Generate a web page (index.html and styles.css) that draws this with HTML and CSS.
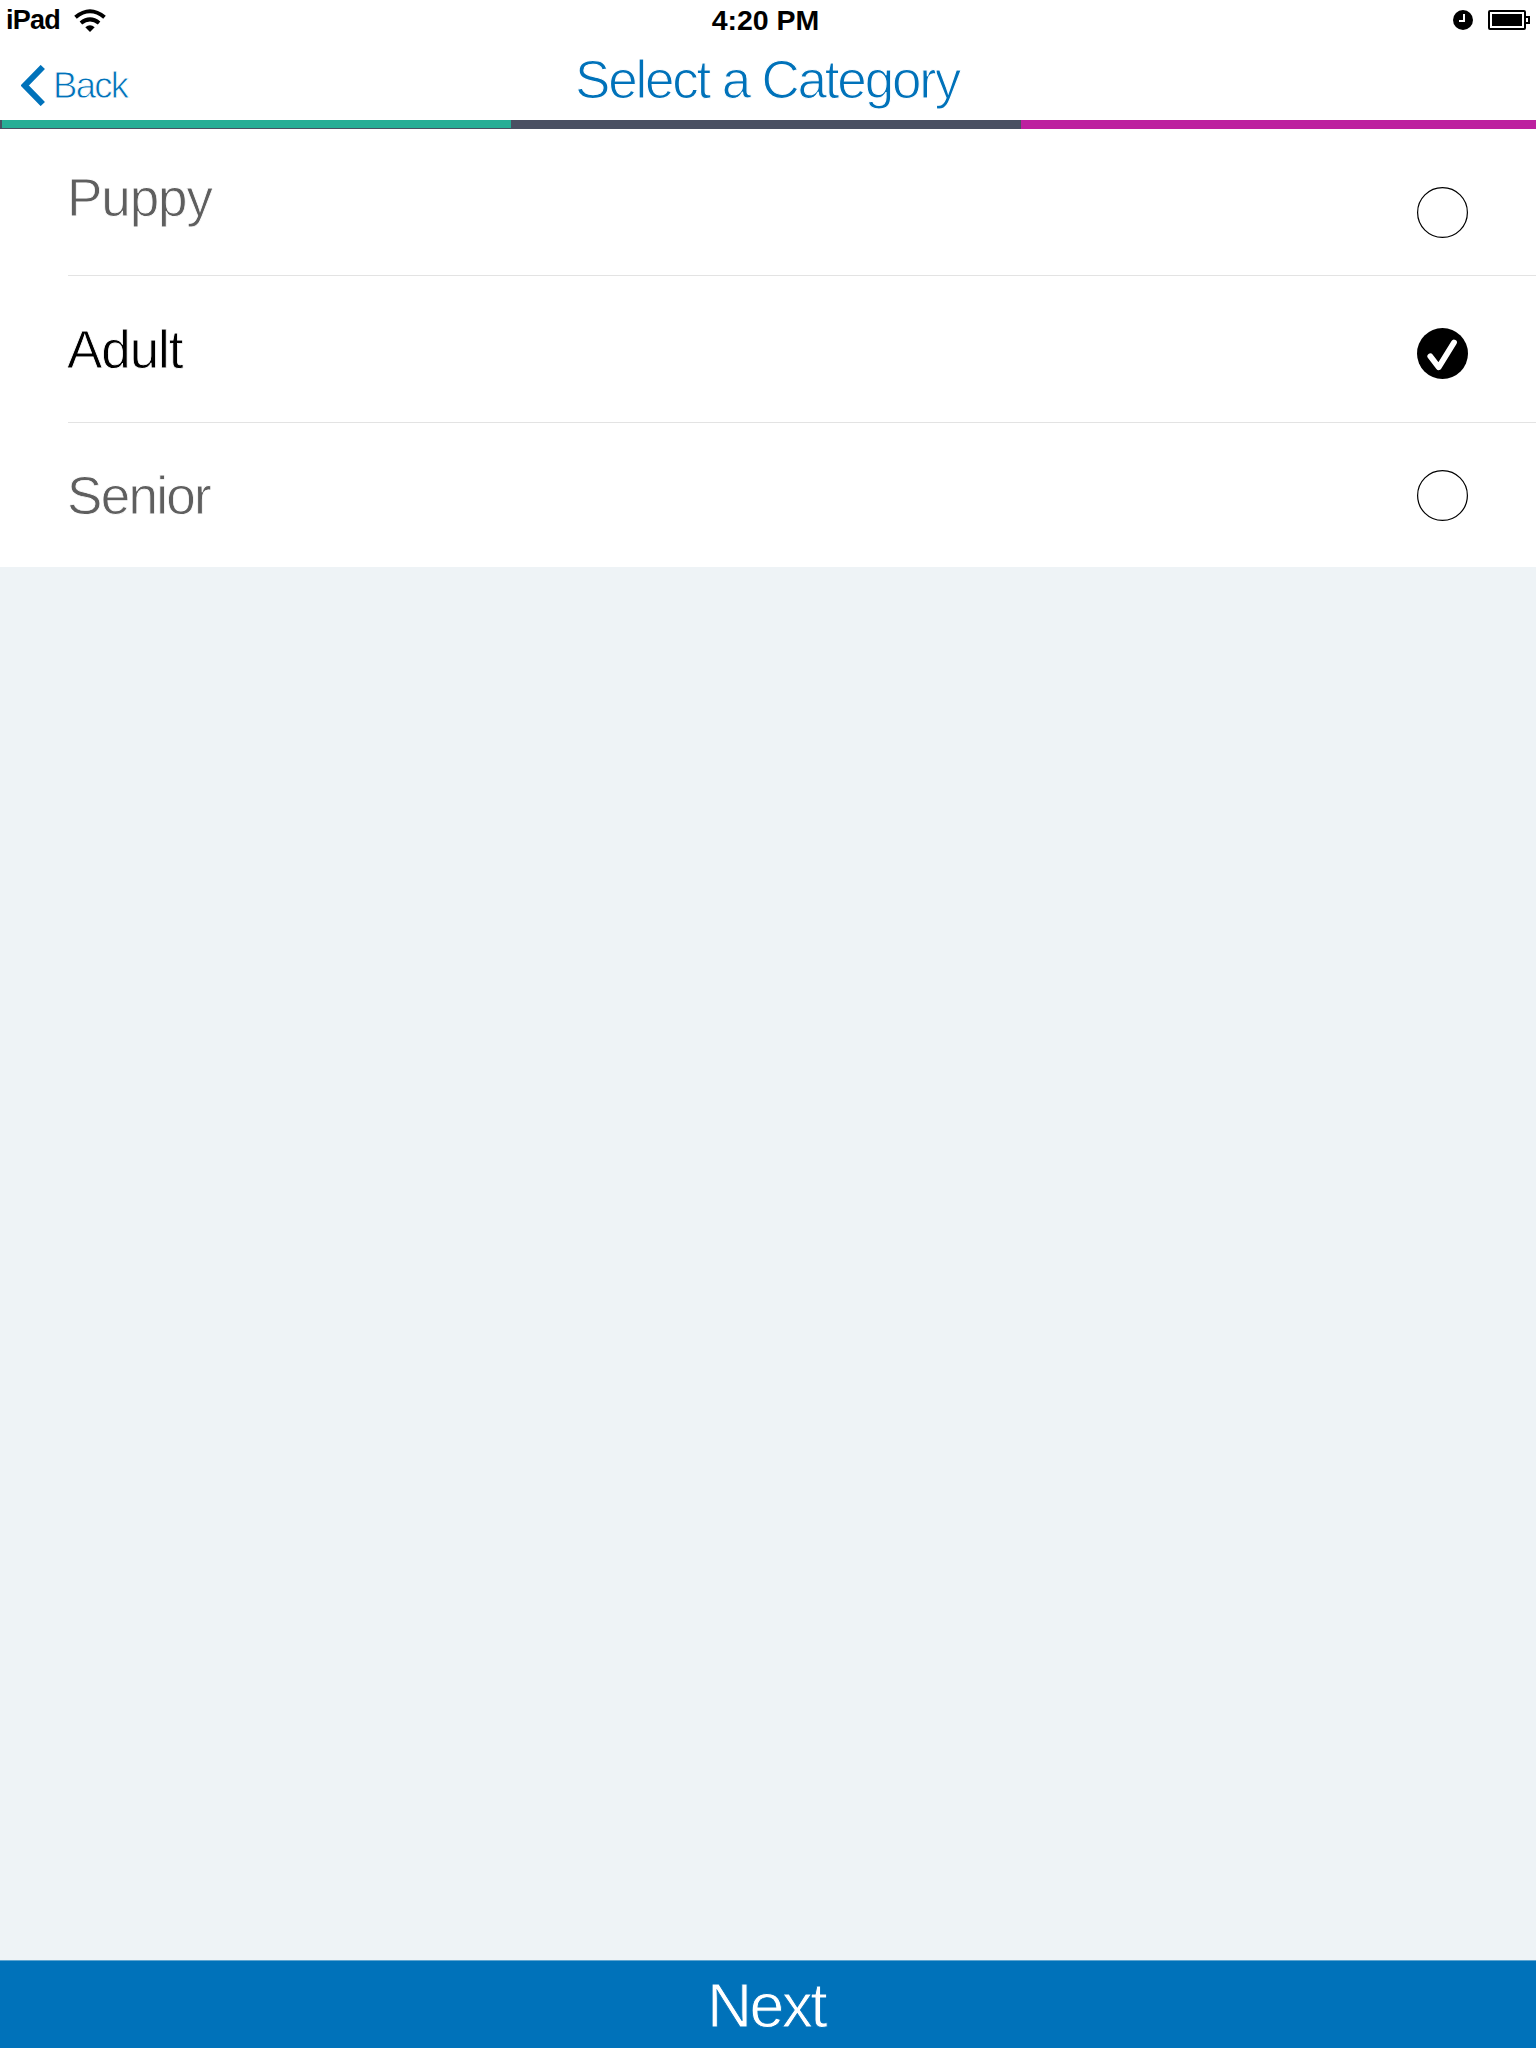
FILE: index.html
```html
<!DOCTYPE html>
<html lang="en">
<head>
<meta charset="utf-8">
<title>Select a Category</title>
<link rel="stylesheet" href="styles.css">
</head>
<body>
<div class="screen">
  <div class="status">
    <div class="status-left">
      <span class="device">iPad</span>
      <svg class="wifi" width="32" height="24" viewBox="0 0 32 24" fill="none" stroke="#000" stroke-width="4">
        <path d="M1.5 8.2Q16 -3.8 30.500 8.200"/>
        <path d="M6.900 14Q16 6.800 25.100 14"/>
        <path d="M11.300 18.200Q16 14.200 20.700 18.200L16 23Z" fill="#000" stroke="none"/>
      </svg>
    </div>
    <span class="time">4:20 PM</span>
    <div class="status-right">
      <svg width="20" height="20" viewBox="0 0 20 20"><circle cx="10" cy="10" r="10"/><path d="M11 4V11H6" fill="none" stroke="#fff" stroke-width="2"/></svg>
      <svg width="42" height="20" viewBox="0 0 42 20"><rect x="1" y="1" width="36" height="18" rx="1" fill="none" stroke="#000" stroke-width="2"/><rect x="4" y="4" width="30" height="12"/><path d="M38 7H41V13H38" fill="none" stroke="#000" stroke-width="2"/></svg>
    </div>
  </div>
  <header class="nav">
    <a class="back">
      <svg width="24" height="41" viewBox="0 0 24 41" fill="none" stroke="#0072ba" stroke-width="6"><path d="M21.800 2L3.800 20.500L21.800 39"/></svg>
      <span class="back-label">Back</span>
    </a>
    <h1 class="title">Select a Category</h1>
  </header>
  <div class="steps"><i class="step-one"></i><i class="step-two"></i><i class="step-three"></i></div>
  <main class="list">
    <div class="row row-first"><span class="label puppy">Puppy</span>
      <svg class="radio" width="51" height="51" viewBox="0 0 51 51"><circle cx="25.500" cy="25.500" r="24.900"/></svg>
    </div>
    <div class="row row-selected"><span class="label adult">Adult</span>
      <svg class="check" width="51" height="51" viewBox="0 0 51 51"><circle cx="25.500" cy="25.500" r="25.500"/><path d="M13.300 28.300L21.700 39.300L37 14.500" fill="none" stroke="#fff" stroke-width="5.800" stroke-linecap="round" stroke-linejoin="round"/></svg>
    </div>
    <div class="row row-last"><span class="label senior">Senior</span>
      <svg class="radio" width="51" height="51" viewBox="0 0 51 51"><circle cx="25.500" cy="25.500" r="24.900"/></svg>
    </div>
  </main>
  <footer class="next"><span class="next-label">Next</span></footer>
</div>
</body>
</html>
```
FILE: styles.css
```css
* { box-sizing: border-box; }
body { margin: 0; font-family: "Liberation Sans", Arial, sans-serif; background: #eef3f6; }
svg { display: block; flex: none; }
.screen { display: flex; flex-direction: column; width: 1536px; height: 2048px; }

.status { display: grid; grid-template-columns: 1fr auto 1fr; align-items: center; height: 40px; padding: 0 6px; background: #fff; color: #000; font-weight: bold; }
.status-left { display: flex; align-items: center; gap: 14px; }
.device { font-size: 27px; letter-spacing: -0.8px; }
.wifi { margin-top: 1px; }
.time { margin-right: 5px; font-size: 28.5px; }
.status-right { display: flex; justify-content: flex-end; gap: 15px; }

.nav { display: grid; grid-template-columns: 1fr auto 1fr; height: 80px; padding: 0 21px; background: #fff; color: #0072ba; }
.back { display: flex; align-items: center; gap: 8px; padding-top: 10px; }
.back-label { padding-top: 2px; font-size: 36.5px; line-height: 40px; letter-spacing: -1.7px; -webkit-text-stroke: 0.8px #fff; }
.title { margin: 0 2px 0 0; font-size: 53px; font-weight: normal; line-height: 79px; letter-spacing: -2.2px; -webkit-text-stroke: 1.1px #fff; }

.steps { display: flex; height: 9px; padding-left: 2px; background: #4a5062; }
.step-one { width: 509px; height: 8px; background: #27ae96; }
.step-two { width: 510px; }
.step-three { flex: 1; background: #bd209f; }

.list { padding-left: 68px; background: #fff; }
.row { display: flex; align-items: center; justify-content: space-between; height: 147px; padding-right: 68px; border-bottom: 1px solid #e3e3e3; }
.row-last { height: 144px; border-bottom: 0; }
.label { margin-left: -1px; padding-top: 2px; font-size: 53px; line-height: 60px; color: #5f5f5f; -webkit-text-stroke: 0.8px #fff; }
.radio { fill: none; stroke: #000; stroke-width: 1.2px; }
.row-first .label { margin-bottom: 10px; }
.row-first .radio { margin-top: 21px; }
.row-selected .label { color: #000; }
.check { margin-top: 8px; }
.puppy { letter-spacing: -1.1px; }
.adult { letter-spacing: -1.1px; }
.senior { letter-spacing: -1.7px; }

.next { display: flex; align-items: center; justify-content: center; height: 88px; margin-top: auto; border-top: 1px solid #5ea5d0; background: #0072ba; color: #fff; }
.next-label { margin-right: 4px; font-size: 62.5px; letter-spacing: -2.6px; -webkit-text-stroke: 0.9px #0072ba; }
```
